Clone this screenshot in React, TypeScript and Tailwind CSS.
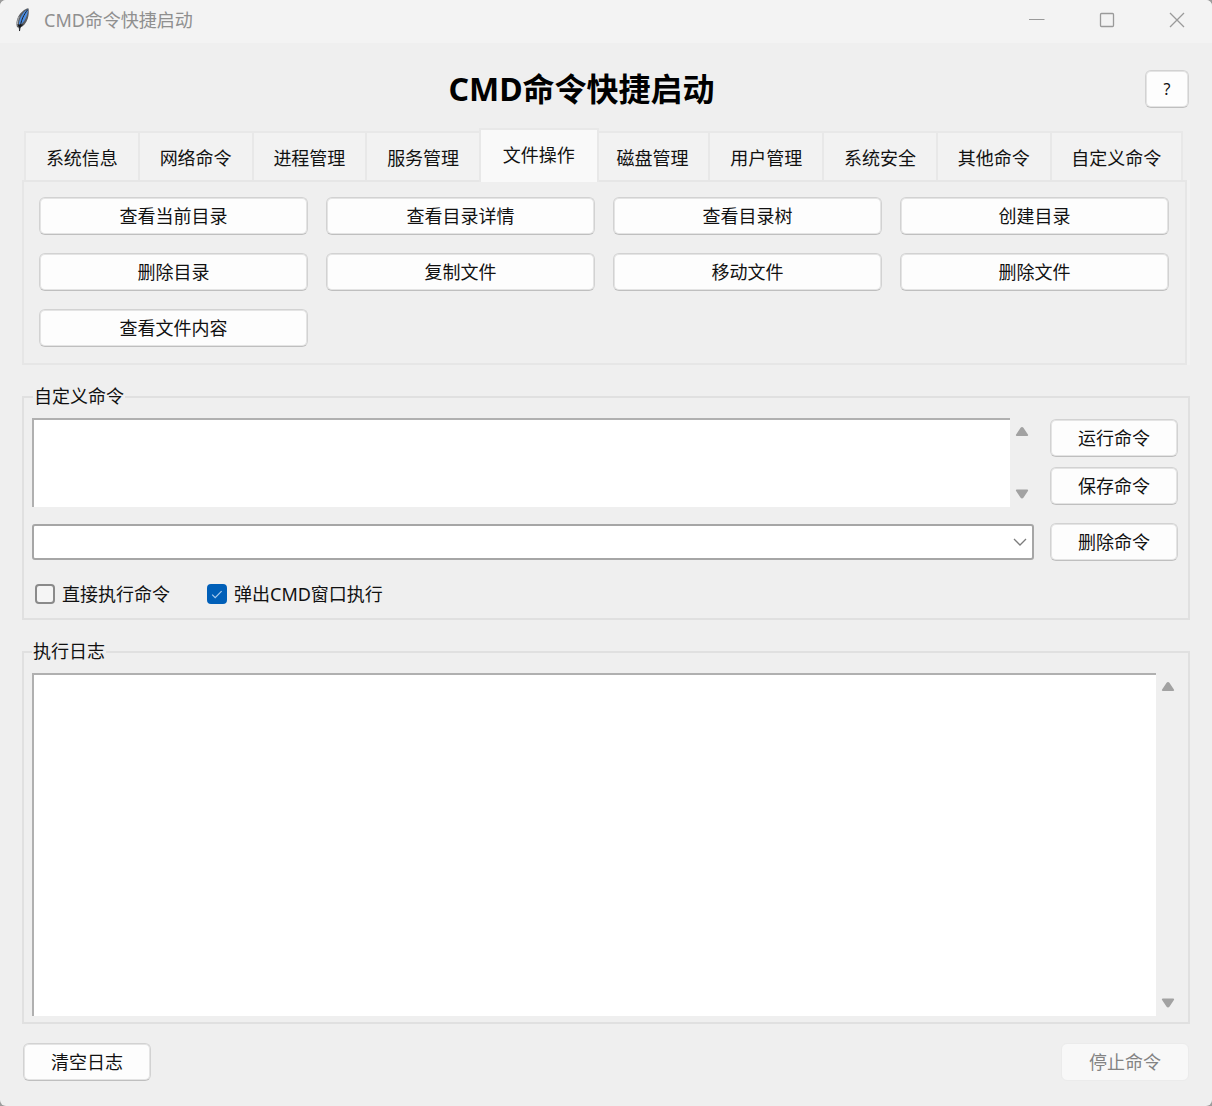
import React, { useState } from "react";
import clsx from "clsx";

const tabs: { name: string; commands: string[] }[] = [
  { name: "系统信息", commands: [] },
  { name: "网络命令", commands: [] },
  { name: "进程管理", commands: [] },
  { name: "服务管理", commands: [] },
  {
    name: "文件操作",
    commands: [
      "查看当前目录",
      "查看目录详情",
      "查看目录树",
      "创建目录",
      "删除目录",
      "复制文件",
      "移动文件",
      "删除文件",
      "查看文件内容",
    ],
  },
  { name: "磁盘管理", commands: [] },
  { name: "用户管理", commands: [] },
  { name: "系统安全", commands: [] },
  { name: "其他命令", commands: [] },
  { name: "自定义命令", commands: [] },
];

interface PushButtonProps extends React.ButtonHTMLAttributes<HTMLButtonElement> {
  className?: string;
}

function PushButton({ className, children, ...rest }: PushButtonProps) {
  return (
    <button
      type="button"
      className={clsx(
        "flex h-[38px] items-center justify-center rounded-md border border-[#d2d2d2] border-b-[#bfbfbf] bg-[#fdfdfd] leading-6 inset-shadow-[0_0_0_1px_#e4e4e4]",
        "disabled:border-[#ebebeb] disabled:bg-[#f8f8f8] disabled:text-[#838383] disabled:inset-shadow-none",
        className
      )}
      {...rest}
    >
      {children}
    </button>
  );
}

function ScrollArrows() {
  return (
    <div className="flex w-6 shrink-0 flex-col items-center justify-between py-[7px]">
      <button type="button" aria-label="向上滚动">
        <svg width="14" height="12" viewBox="0 0 14 12" className="block">
          <path d="M1.8 11h10.400c.9 0 1.200-.8.7-1.500L8.400 2.700c-.7-1-2.100-1-2.800 0L1.100 9.500c-.5.7-.2 1.500.7 1.500z" fill="#a2a2a2" />
        </svg>
      </button>
      <button type="button" aria-label="向下滚动">
        <svg width="14" height="12" viewBox="0 0 14 12" className="block">
          <path d="M1.8 1.500h10.400c.9 0 1.200.8.7 1.500L8.400 9.800c-.7 1-2.100 1-2.800 0L1.100 3c-.5-.7-.2-1.500.7-1.500z" fill="#a2a2a2" />
        </svg>
      </button>
    </div>
  );
}

interface CheckOptionProps {
  id: string;
  label: string;
  checked: boolean;
  onChange: (checked: boolean) => void;
}

function CheckOption({ id, label, checked, onChange }: CheckOptionProps) {
  return (
    <div className="flex items-center gap-[7px]">
      <span className="relative size-5">
        <input
          id={id}
          type="checkbox"
          checked={checked}
          onChange={(e) => onChange(e.target.checked)}
          className="block size-5 appearance-none rounded border-2 border-[#8a8a8a] bg-[#f5f5f5] checked:border-[#005fb8] checked:bg-[#005fb8]"
        />
        {checked && (
          <svg width="20" height="20" viewBox="0 0 20 20" className="pointer-events-none absolute inset-0">
            <path d="M5.200 10.600l3 3 6.400-6.400" fill="none" stroke="#a9cbed" strokeWidth="1.200" />
          </svg>
        )}
      </span>
      <label htmlFor={id} className="leading-6">
        {label}
      </label>
    </div>
  );
}

function FeatherIcon() {
  return (
    <svg width="16" height="26" viewBox="0 0 16 26" className="shrink-0">
      <path d="M13.400 1.200C9.600 1.800 5.400 5.400 3 10c-1.600 3.400-2 7.400-1 10l1.600.8.8 3.600.8-3.800c3.400-1.200 6.200-4.600 7.600-9 1-3.600 1.400-7 .6-10.400z" fill="#5a5d62" />
      <path d="M13 2.200C10 3.400 7 7 5.400 11c-1 2.400-1.600 4.800-1.400 7l1.600-.4c3-2.200 4.800-5 6-8.600.8-2.400 1.400-4.600 1.400-6.800z" fill="#4a8fe7" />
      <path d="M4.200 9.600C3 12 2.200 15 2.400 18.400" fill="none" stroke="#b4b7bb" strokeWidth="1" />
      <path d="M12.800 2.600C9 7.400 5.800 12.600 4.500 24" fill="none" stroke="#1b1d22" strokeWidth="1" />
      <path d="M2.600 17.500l2.200 3 3-3" fill="#17191d" stroke="#17191d" strokeWidth=".8" />
    </svg>
  );
}

function TitleBar() {
  return (
    <header className="flex h-[43px] items-start bg-[#f3f3f3] text-[#8f8f8f]">
      <div className="flex h-[39px] flex-1 items-center gap-[13px] pl-[15px]">
        <FeatherIcon />
        <span>CMD命令快捷启动</span>
      </div>
      <button type="button" aria-label="最小化" className="flex h-[39px] w-[70px] items-center justify-center">
        <svg width="16" height="16" viewBox="0 0 16 16">
          <path d="M0 7.500h15.500" stroke="#9a9a9a" fill="none" />
        </svg>
      </button>
      <button type="button" aria-label="最大化" className="flex h-[39px] w-[70px] items-center justify-center">
        <svg width="16" height="16" viewBox="0 0 16 16">
          <rect x="1.500" y="1.500" width="13" height="13" rx="1" stroke="#9a9a9a" strokeWidth="1.300" fill="none" />
        </svg>
      </button>
      <button type="button" aria-label="关闭" className="flex h-[39px] w-[70px] items-center justify-center">
        <svg width="16" height="16" viewBox="0 0 16 16">
          <path d="M1 1l14 14M15 1L1 15" stroke="#9a9a9a" strokeWidth="1.300" fill="none" />
        </svg>
      </button>
    </header>
  );
}

export default function App() {
  const [activeTab, setActiveTab] = useState(4);
  const [command, setCommand] = useState("");
  const [savedCommand, setSavedCommand] = useState("");
  const [log, setLog] = useState("");
  const [runDirect, setRunDirect] = useState(false);
  const [runInWindow, setRunInWindow] = useState(true);

  return (
    <div className="min-h-screen bg-[#9c9c9c] font-['Noto_Sans','Noto_Sans_CJK_SC',sans-serif] text-lg leading-6 text-[#111111]">
      <div className="flex min-h-screen flex-col overflow-hidden rounded-md bg-[#efefef]">
        <TitleBar />

        <main className="flex flex-1 flex-col px-[22px] pt-[27px] pb-[25px]">
          {/* Heading */}
          <div className="flex items-center pr-[1px]">
            <h1 className="flex-1 pr-1 text-center text-[32px] leading-[38px] font-bold text-black">CMD命令快捷启动</h1>
            <PushButton className="w-11" aria-label="帮助">
              <span className="text-base">?</span>
            </PushButton>
          </div>

          {/* Command categories */}
          <div className="mt-[20px] mr-[3px]">
            <div role="tablist" className="flex items-end pr-1 pl-[2px]">
              {tabs.map((tab, i) => (
                <button
                  key={tab.name}
                  type="button"
                  role="tab"
                  aria-selected={activeTab === i}
                  onClick={() => setActiveTab(i)}
                  className={clsx(
                    "basis-0 border-[#e8e8e8] whitespace-nowrap",
                    activeTab === i
                      ? "relative z-10 -mx-[2px] -mb-[2px] h-[54px] grow-[118] border-2 border-b-0 bg-[#f9f9f9] pb-[2px]"
                      : "h-[49px] border-t-2 border-r-2 bg-[#f2f2f2] pt-[2px] first:border-l-2",
                    activeTab !== i && (i === tabs.length - 1 ? "grow-[132]" : "grow-[114]")
                  )}
                >
                  {tab.name}
                </button>
              ))}
            </div>
            <div
              role="tabpanel"
              className="grid min-h-[185px] grid-cols-4 content-start gap-[18px] border-2 border-[#e6e6e6] pt-[15px] pr-4 pb-4 pl-[15px] shadow-[3px_0_0_#f2f2f2]"
            >
              {tabs[activeTab].commands.map((name) => (
                <PushButton key={name} onClick={() => setCommand(name)}>
                  {name}
                </PushButton>
              ))}
            </div>
          </div>

          {/* Custom command */}
          <section className="mt-[31px] border-2 border-[#e0e0e0] pr-[10px] pb-3 pl-2">
            <h2 className="-mt-[14px] ml-[1px] w-fit bg-[#efefef] px-[1px] leading-6">自定义命令</h2>
            <div className="grid grid-cols-[1fr_128px] gap-4 pt-[10px]">
              <div className="flex h-[89px]">
                <textarea
                  aria-label="自定义命令"
                  value={command}
                  onChange={(e) => setCommand(e.target.value)}
                  className="min-w-0 flex-1 resize-none border-t-2 border-l-2 border-[#b0b0b0] bg-white px-1 outline-none"
                />
                <ScrollArrows />
              </div>
              <div className="flex flex-col gap-[10px] pt-[1px]">
                <PushButton>运行命令</PushButton>
                <PushButton>保存命令</PushButton>
              </div>
              <div className="relative self-center">
                <select
                  aria-label="已保存的命令"
                  value={savedCommand}
                  onChange={(e) => setSavedCommand(e.target.value)}
                  className="block h-[36px] w-full appearance-none rounded-[3px] border-2 border-[#a6a6a6] bg-white px-2 outline-none"
                >
                  <option value=""></option>
                </select>
                <svg width="14" height="8" viewBox="0 0 14 8" className="pointer-events-none absolute top-[14px] right-[7px]">
                  <path d="M1 1l6 6 6-6" fill="none" stroke="#7c7c7c" strokeWidth="1.300" />
                </svg>
              </div>
              <PushButton>删除命令</PushButton>
            </div>
            <div className="mt-[21px] flex gap-[37px] pl-[3px]">
              <CheckOption id="run-direct" label="直接执行命令" checked={runDirect} onChange={setRunDirect} />
              <CheckOption id="run-window" label="弹出CMD窗口执行" checked={runInWindow} onChange={setRunInWindow} />
            </div>
          </section>

          {/* Log output */}
          <section className="mt-[31px] flex flex-1 flex-col border-2 border-[#e0e0e0] px-2 pb-[6px]">
            <h2 className="-mt-[14px] w-fit bg-[#efefef] px-[1px] leading-6">执行日志</h2>
            <div className="flex min-h-[200px] flex-1 pt-[10px]">
              <textarea
                aria-label="执行日志"
                value={log}
                readOnly
                className="min-w-0 flex-1 resize-none border-t-2 border-l-2 border-[#b0b0b0] bg-white px-1 outline-none"
              />
              <ScrollArrows />
            </div>
          </section>

          <div className="mt-[19px] flex justify-between px-[1px]">
            <PushButton className="w-32" onClick={() => setLog("")}>
              清空日志
            </PushButton>
            <PushButton className="w-32" disabled>
              停止命令
            </PushButton>
          </div>
        </main>
      </div>
    </div>
  );
}
